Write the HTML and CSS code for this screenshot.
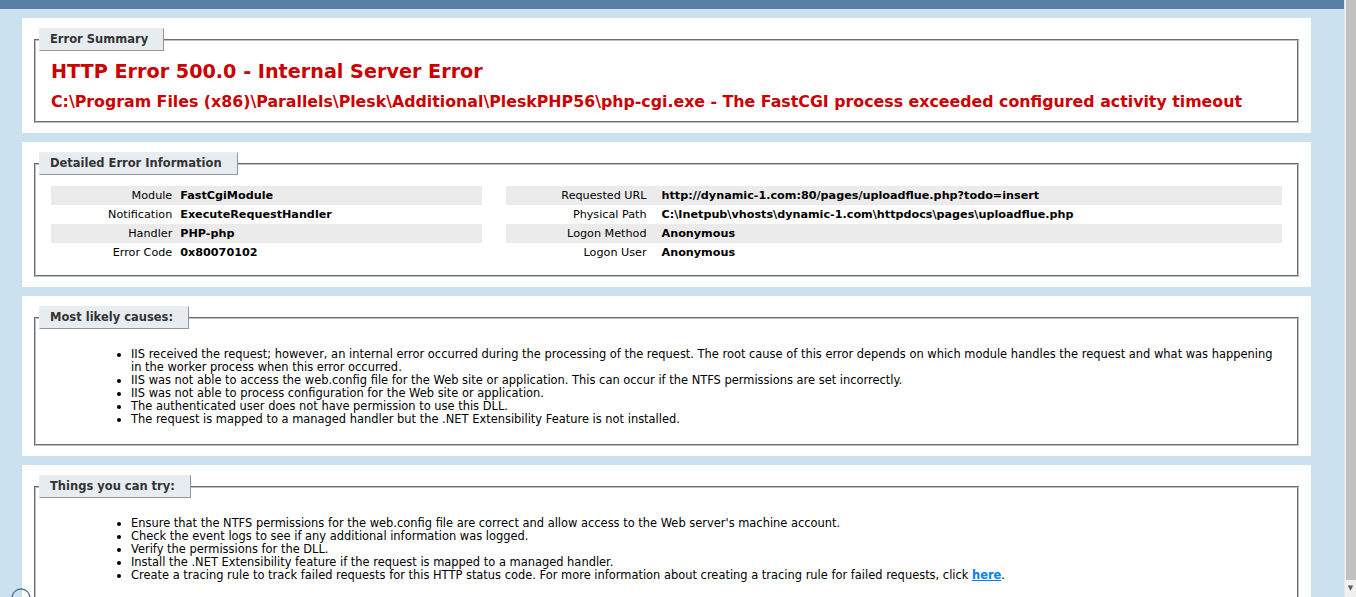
FILE: index.html
```html
<!DOCTYPE html>
<html lang="en">
<head>
  <meta charset="UTF-8">
  <title>IIS 7.5 Detailed Error - 500.0 - Internal Server Error</title>
  <link rel="stylesheet" href="styles.css">
</head>
<body>
<div class="page">
  <div class="viewport">
    <div id="server_version"></div>

    <div id="content">

      <div class="content-container summary-container">
        <fieldset>
          <legend>Error Summary</legend>
          <h2>HTTP Error 500.0 - Internal Server Error</h2>
          <h3>C:\Program Files (x86)\Parallels\Plesk\Additional\PleskPHP56\php-cgi.exe - The FastCGI process exceeded configured activity timeout</h3>
        </fieldset>
      </div>

      <div class="content-container">
        <fieldset>
          <legend>Detailed Error Information</legend>
          <div class="details">
            <div id="details-left">
              <table>
                <tr class="alt"><th>Module</th><td>FastCgiModule</td></tr>
                <tr><th>Notification</th><td>ExecuteRequestHandler</td></tr>
                <tr class="alt"><th>Handler</th><td>PHP-php</td></tr>
                <tr><th>Error Code</th><td>0x80070102</td></tr>
              </table>
            </div>
            <div id="details-right">
              <table>
                <tr class="alt"><th>Requested URL</th><td>http://dynamic-1.com:80/pages/uploadflue.php?todo=insert</td></tr>
                <tr><th>Physical Path</th><td>C:\Inetpub\vhosts\dynamic-1.com\httpdocs\pages\uploadflue.php</td></tr>
                <tr class="alt"><th>Logon Method</th><td>Anonymous</td></tr>
                <tr><th>Logon User</th><td>Anonymous</td></tr>
              </table>
            </div>
          </div>
        </fieldset>
      </div>

      <div class="content-container">
        <fieldset>
          <legend>Most likely causes:</legend>
          <ul>
            <li>IIS received the request; however, an internal error occurred during the processing of the request. The root cause of this error depends on which module handles the request and what was happening in the worker process when this error occurred.</li>
            <li>IIS was not able to access the web.config file for the Web site or application. This can occur if the NTFS permissions are set incorrectly.</li>
            <li>IIS was not able to process configuration for the Web site or application.</li>
            <li>The authenticated user does not have permission to use this DLL.</li>
            <li>The request is mapped to a managed handler but the .NET Extensibility Feature is not installed.</li>
          </ul>
        </fieldset>
      </div>

      <div class="content-container">
        <fieldset>
          <legend>Things you can try:</legend>
          <ul>
            <li>Ensure that the NTFS permissions for the web.config file are correct and allow access to the Web server's machine account.</li>
            <li>Check the event logs to see if any additional information was logged.</li>
            <li>Verify the permissions for the DLL.</li>
            <li>Install the .NET Extensibility feature if the request is mapped to a managed handler.</li>
            <li>Create a tracing rule to track failed requests for this HTTP status code. For more information about creating a tracing rule for failed requests, click <a href="#">here</a>.</li>
          </ul>
        </fieldset>
      </div>

    </div>
  </div>

  <div class="scrollbar">
    <div class="thumb"></div>
    <div class="arrow">&#9660;</div>
  </div>
</div>

<svg class="corner-badge" width="24" height="12" viewBox="0 0 24 12">
  <circle cx="12" cy="13" r="9" fill="none" stroke="#4d6f93" stroke-width="1.3"/>
</svg>
</body>
</html>
```

FILE: styles.css
```css
html, body {
  margin: 0;
  height: 100%;
}
body {
  font-size: 11.2px;
  font-family: "DejaVu Sans", Verdana, Arial, sans-serif;
  background: #CBE1EF;
  color: #000;
  overflow: hidden;
}
.page {
  display: flex;
  height: 100vh;
}
.viewport {
  flex: 1;
  overflow: hidden;
}
#server_version {
  height: 9px;
  background-color: #5A7FA5;
}
#content {
  display: flex;
  flex-direction: column;
  gap: 9px;
  padding: 9px 0 0 22px;
}
.content-container {
  background: #FFF;
  width: 1269px;
  padding: 10px;
}
fieldset {
  margin: 0 2px;
  padding: 0 15px 10px 15px;
  border: 2px groove #c0c0c0;
  min-width: 0;
}
legend {
  color: #333333;
  padding: 4px 15px 4px 10px;
  margin: 0 0 8px -12px;
  border-top: 1px solid #EDEDED;
  border-left: 1px solid #EDEDED;
  border-right: 1px solid #969696;
  border-bottom: 1px solid #969696;
  background: #E7ECF0;
  font-weight: bold;
  font-size: 11.5px;
  line-height: 13px;
}
h2 {
  font-size: 19.2px;
  margin: 2px 0 0 0;
  color: #CC0000;
  line-height: 22px;
}
h3 {
  font-size: 15.8px;
  margin: 10px 0 0 0;
  color: #CC0000;
  line-height: 18px;
}
.details {
  display: grid;
  grid-template-columns: 35% 63%;
  column-gap: 2%;
}
table {
  margin: 3px 0;
  width: 100%;
  border-collapse: collapse;
}
td, th {
  vertical-align: top;
  padding: 3px 0;
  line-height: 13px;
  text-align: left;
}
th {
  width: 30%;
  text-align: right;
  padding-right: 8px;
  font-weight: normal;
}
td {
  font-weight: bold;
}
#details-right th {
  width: 20%;
  padding-right: 15px;
}
tr.alt td, tr.alt th {
  background-color: #EBEBEB;
}
ul {
  margin: 11px 0 8px 40px;
  padding-left: 40px;
  font-size: 11.45px;
  line-height: 13px;
}
a:link, a:visited {
  color: #007EFF;
  font-weight: bold;
}
.scrollbar {
  width: 11px;
  display: flex;
  flex-direction: column;
  background: #F0F0F0;
  border-left: 1px solid #E8E8E8;
}
.thumb {
  flex: 1;
  margin-left: 1px;
  background: #C1C1C1;
}
.arrow {
  height: 17px;
  font-size: 7px;
  line-height: 17px;
  text-align: center;
  color: #606060;
}
.corner-badge {
  position: fixed;
  left: 9px;
  bottom: 0;
}
```
